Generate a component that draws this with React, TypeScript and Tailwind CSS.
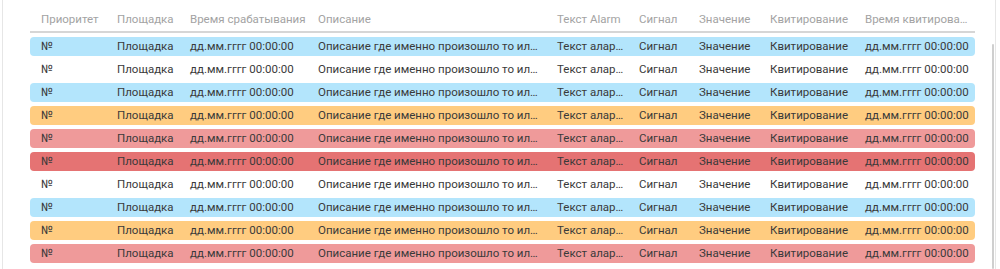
import React from "react";

const cols = "grid grid-cols-[76px_73px_128px_239px_82px_60px_71px_95px_121px]";

const headers = [
  "Приоритет",
  "Площадка",
  "Время срабатывания",
  "Описание",
  "Текст Alarm",
  "Сигнал",
  "Значение",
  "Квитирование",
  "Время квитирования",
];

const cells = [
  "№",
  "Площадка",
  "дд.мм.гггг 00:00:00",
  "Описание где именно произошло то или иное событие",
  "Текст аларма",
  "Сигнал",
  "Значение",
  "Квитирование",
  "дд.мм.гггг 00:00:00",
];

const rowColors = [
  "bg-[#b3e5fc]",
  "bg-white",
  "bg-[#b3e5fc]",
  "bg-[#ffcc80]",
  "bg-[#ef9a9a]",
  "bg-[#e57373]",
  "bg-white",
  "bg-[#b3e5fc]",
  "bg-[#ffcc80]",
  "bg-[#ef9a9a]",
];

export default function App() {
  return (
    <div className="w-[1000px] h-[269px] bg-white overflow-hidden font-['Roboto',sans-serif]">
      <div className="relative ml-[2px] w-[994px] h-[269px] border-l border-r border-[#e6e6e6] pt-[9px] pl-[27px]">
        <div className="absolute right-[1px] top-[44px] bottom-0 w-[2px] bg-[#cfcfcf] rounded-full" />
        <div className={`${cols} w-[945px] h-[24px] items-center border-b-2 border-[#d6d6d6] text-[11.5px] text-[#a3a3a3]`}>
          {headers.map((h, i) => (
            <div key={i} className={`pl-[11px] whitespace-nowrap ${i === 8 ? "pr-[6px] truncate" : "overflow-visible"}`}>
              {h}
            </div>
          ))}
        </div>
        <div className="mt-[4px] flex flex-col gap-[4px] w-[945px]">
          {rowColors.map((c, r) => (
            <div
              key={r}
              className={`${cols} ${c} h-[19px] items-center rounded-[4px] text-[11.5px] text-[#3a3a3a]`}
            >
              {cells.map((t, i) => (
                <div
                  key={i}
                  className={`pl-[11px] truncate ${i === 3 ? "pr-[5px]" : i === 4 ? "pr-[2px]" : "pr-0"}`}
                >
                  {t}
                </div>
              ))}
            </div>
          ))}
        </div>
      </div>
    </div>
  );
}
